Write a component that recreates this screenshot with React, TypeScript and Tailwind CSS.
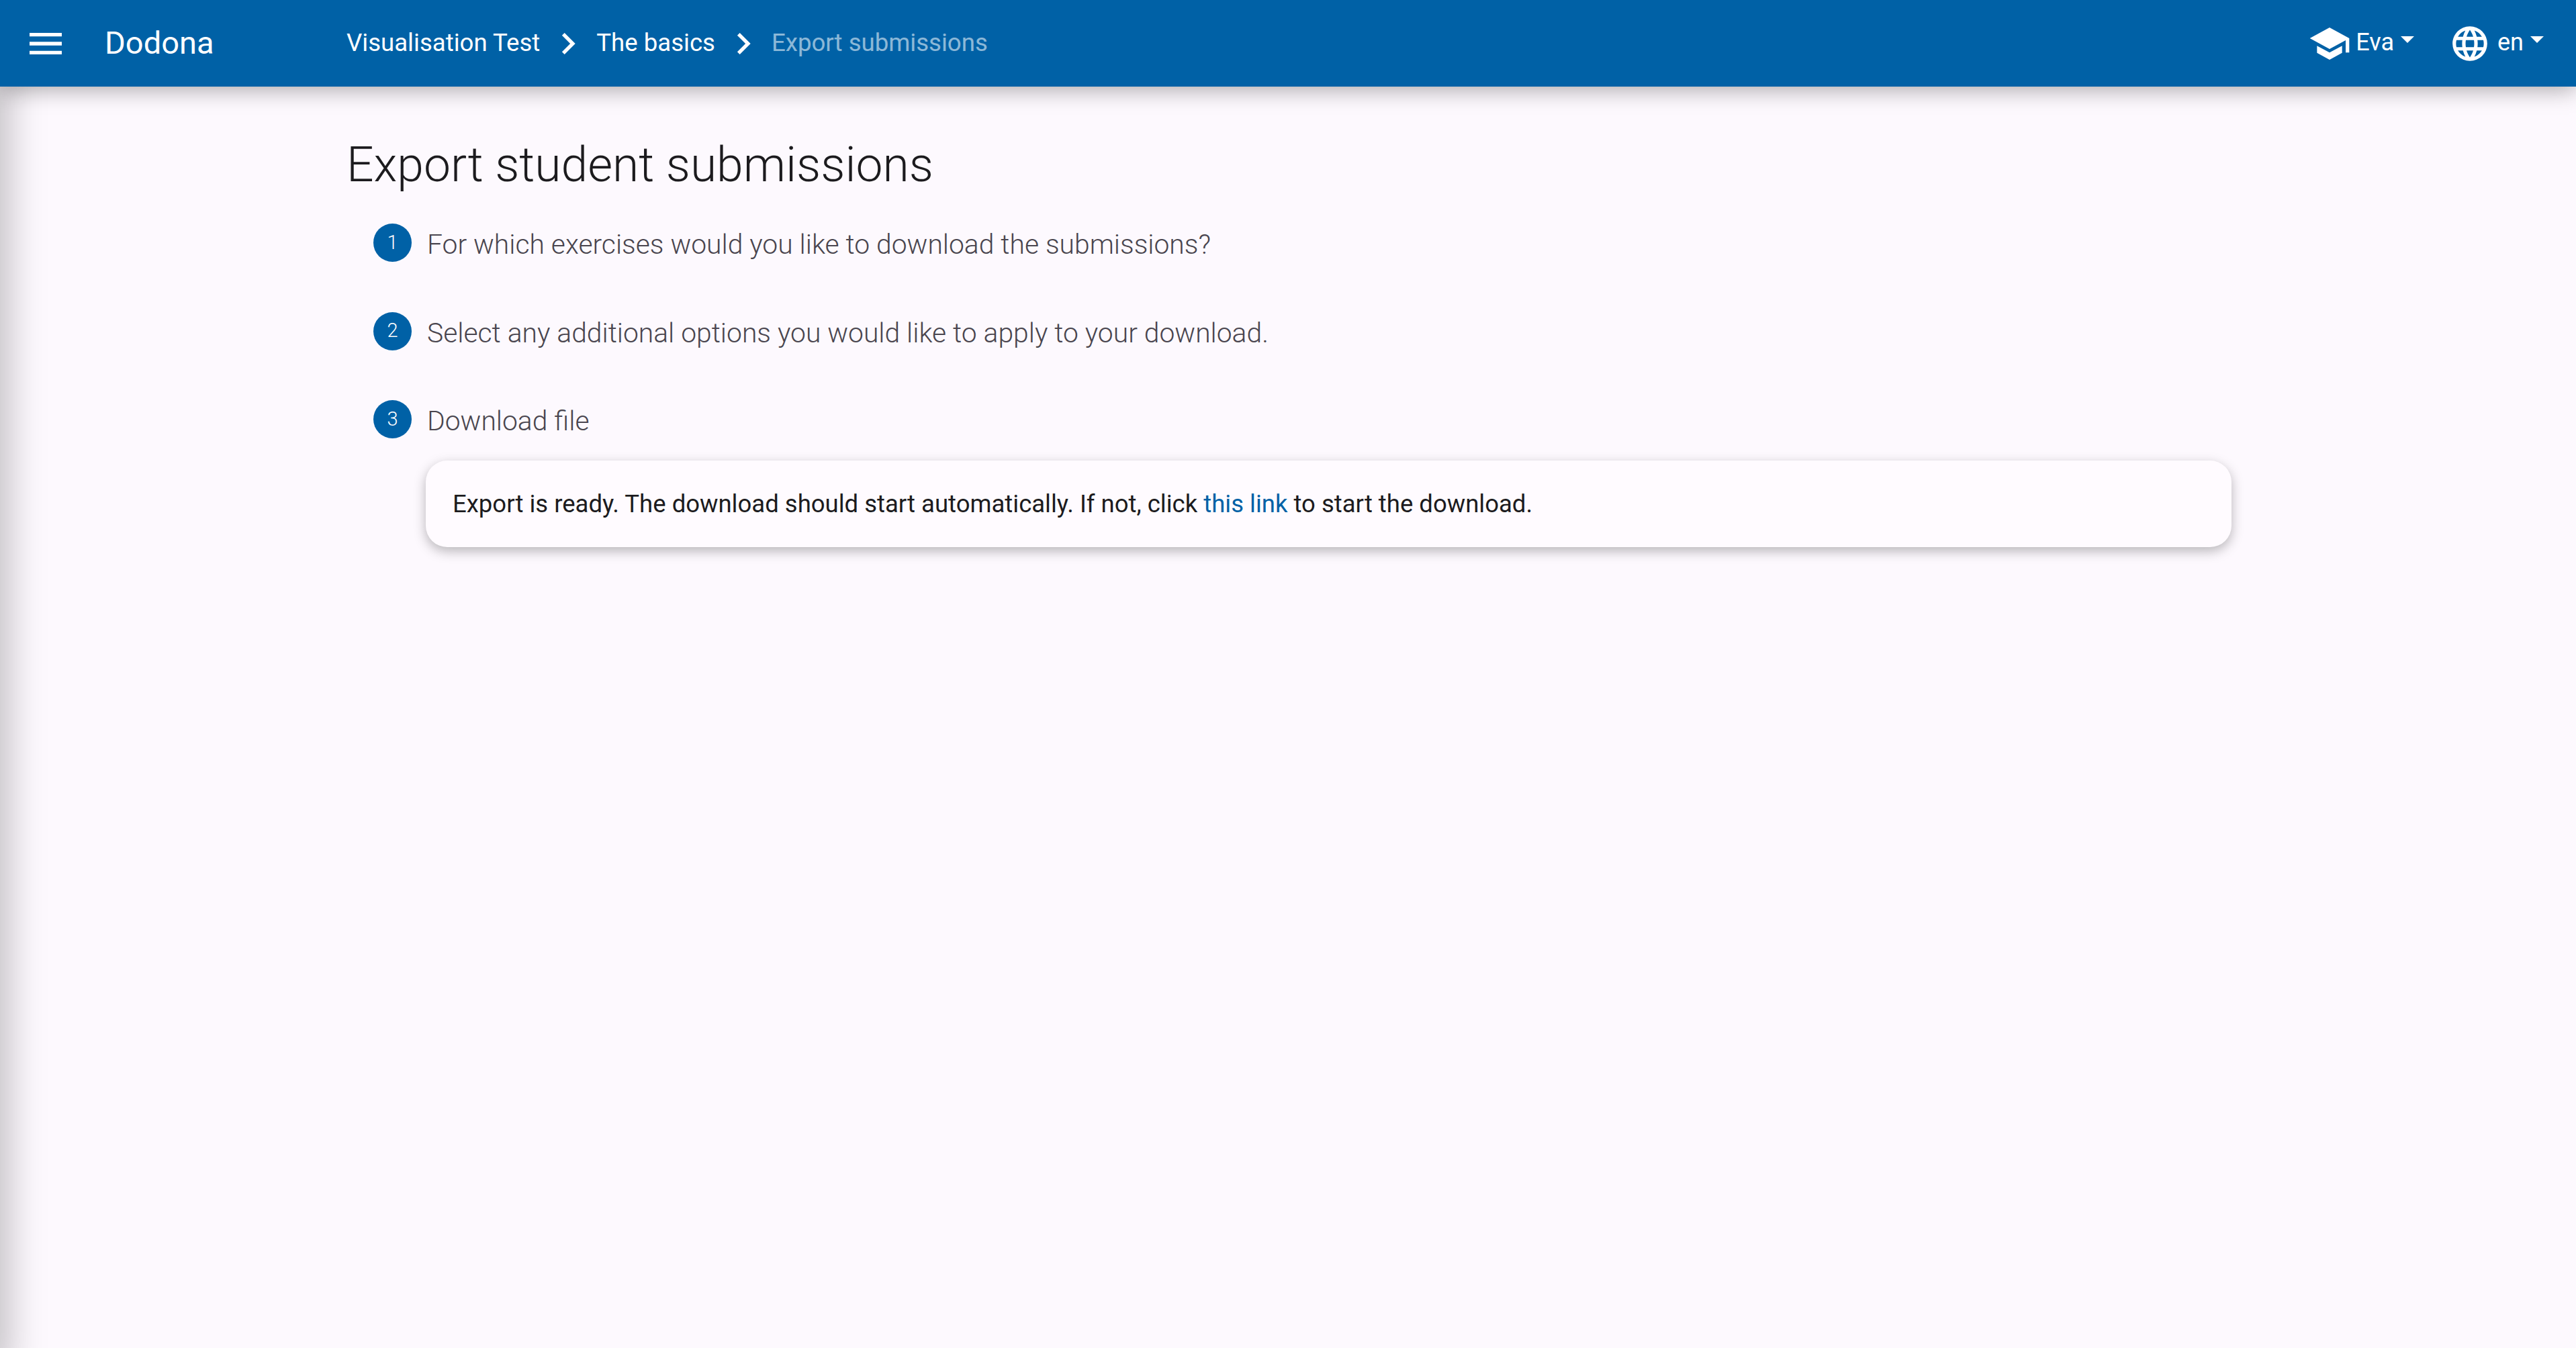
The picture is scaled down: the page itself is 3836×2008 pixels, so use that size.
import React from "react";

const Icon = ({ d, className }: { d: string; className: string }) => (
  <svg viewBox="0 0 24 24" fill="currentColor" className={className}>
    <path d={d} />
  </svg>
);

const menuPath = "M3,6H21V8H3V6M3,11H21V13H3V11M3,16H21V18H3V16Z";
const chevronPath = "M8.59,16.58L13.17,12L8.59,7.41L10,6L16,12L10,18L8.59,16.58Z";
const schoolPath = "M12,3L1,9L12,15L21,10.09V17H23V9M5,13.18V17.18L12,21L19,17.18V13.18L12,17L5,13.18Z";
const webPath =
  "M16.36,14C16.44,13.34 16.5,12.68 16.5,12C16.5,11.32 16.44,10.66 16.36,10H19.74C19.9,10.64 20,11.31 20,12C20,12.69 19.9,13.36 19.74,14M14.59,19.56C15.19,18.45 15.65,17.25 15.97,16H18.92C17.96,17.65 16.43,18.93 14.59,19.56M14.34,14H9.66C9.56,13.34 9.5,12.68 9.5,12C9.5,11.32 9.56,10.65 9.66,10H14.34C14.43,10.65 14.5,11.32 14.5,12C14.5,12.68 14.43,13.34 14.34,14M12,19.96C11.17,18.76 10.5,17.43 10.09,16H13.91C13.5,17.43 12.83,18.76 12,19.96M8,8H5.08C6.03,6.34 7.57,5.06 9.4,4.44C8.8,5.55 8.35,6.75 8,8M5.08,16H8C8.35,17.25 8.8,18.45 9.4,19.56C7.57,18.93 6.03,17.65 5.08,16M4.26,14C4.1,13.36 4,12.69 4,12C4,11.31 4.1,10.64 4.26,10H7.64C7.56,10.66 7.5,11.32 7.5,12C7.5,12.68 7.56,13.34 7.64,14M12,4.03C12.83,5.23 13.5,6.57 13.91,8H10.09C10.5,6.57 11.17,5.23 12,4.03M18.92,8H15.97C15.65,6.75 15.19,5.55 14.59,4.44C16.43,5.07 17.96,6.34 18.92,8M12,2C6.47,2 2,6.5 2,12A10,10 0 0,0 12,22A10,10 0 0,0 22,12A10,10 0 0,0 12,2Z";

const Caret = () => (
  <span className="ml-[10px] mb-[12px] h-0 w-0 border-x-[10px] border-t-[10px] border-x-transparent border-t-white" />
);

const Step = ({ n, label }: { n: number; label: string }) => (
  <div className="flex h-[57px] items-center">
    <span className="flex h-[57px] w-[57px] items-center justify-center rounded-full bg-[#0061a6] text-[29px] font-light text-white">
      {n}
    </span>
    <span className="ml-[23px] pt-[7px] text-[40.8px] font-light text-[#49454e]">{label}</span>
  </div>
);

export default function App() {
  return (
    <div className="flex min-h-screen flex-col bg-[#fdf9fe] font-['Roboto',sans-serif] text-[#1c1b1e]">
      {/* Navbar */}
      <header className="relative z-10 flex h-[129px] items-center bg-[#0061a6] pl-[36px] pr-[48px] text-white shadow-[0_4px_32px_rgba(0,0,0,0.35)]">
        <Icon d={menuPath} className="h-[64px] w-[64px]" />
        <span className="ml-[56px] w-[360px] text-[47px]">Dodona</span>
        <nav className="flex items-center text-[36.6px]">
          <span>Visualisation Test</span>
          <Icon d={chevronPath} className="mx-[10px] h-[64px] w-[64px]" />
          <span>The basics</span>
          <Icon d={chevronPath} className="mx-[10px] h-[64px] w-[64px]" />
          <span className="text-white/55">Export submissions</span>
        </nav>
        <div className="ml-auto flex items-center text-[36px]">
          <Icon d={schoolPath} className="h-[64px] w-[64px]" />
          <span className="mb-[4px] ml-[7px]">Eva</span>
          <Caret />
          <Icon d={webPath} className="ml-[52px] h-[62px] w-[62px]" />
          <span className="mb-[4px] ml-[10px]">en</span>
          <Caret />
        </div>
      </header>

      {/* Page */}
      <main className="relative flex-1 overflow-hidden pl-[516px] pr-[513px] pt-[73px]">
        {/* shadow of the closed drawer */}
        <div className="absolute -left-[40px] -top-[40px] -bottom-[40px] w-[40px] shadow-[0_0_64px_rgba(0,0,0,0.4)]" />
        <h1 className="text-[71.4px] leading-[88px] font-light">Export student submissions</h1>
        <div className="mt-[43px] flex flex-col gap-[74.5px] pl-[40px]">
          <Step n={1} label="For which exercises would you like to download the submissions?" />
          <Step n={2} label="Select any additional options you would like to apply to your download." />
          <Step n={3} label="Download file" />
        </div>
        <div className="ml-[118px] mt-[33px] flex h-[129px] items-center rounded-[32px] bg-[#fffbff] px-[40px] pt-[2px] text-[36.5px] shadow-[0_6px_18px_rgba(0,0,0,0.28)]">
          <p>
            Export is ready. The download should start automatically. If not, click{" "}
            <a href="#" className="text-[#0061a6]">
              this link
            </a>{" "}
            to start the download.
          </p>
        </div>
      </main>
    </div>
  );
}
